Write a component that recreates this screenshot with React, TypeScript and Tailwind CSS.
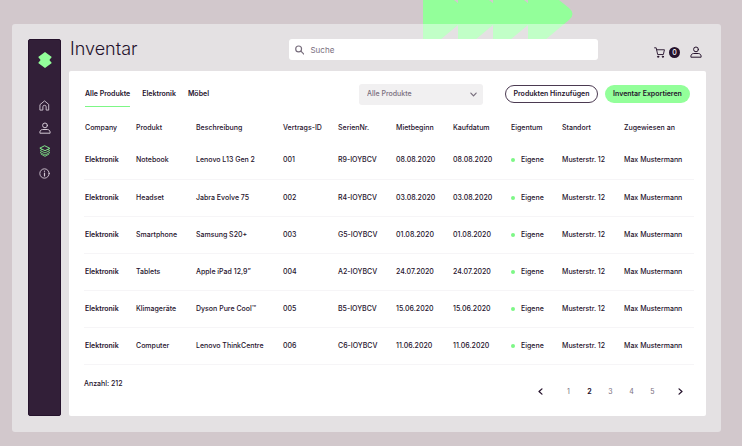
import { useState } from 'react';
import type { ReactNode } from 'react';

type Item = {
  company: string;
  product: string;
  description: string;
  contractId: string;
  serial: string;
  rentStart: string;
  bought: string;
};

const items: Item[] = [
  { company: 'Elektronik', product: 'Notebook', description: 'Lenovo L13 Gen 2', contractId: '001', serial: 'R9-IOYBCV', rentStart: '08.08.2020', bought: '08.08.2020' },
  { company: 'Elektronik', product: 'Headset', description: 'Jabra Evolve 75', contractId: '002', serial: 'R4-IOYBCV', rentStart: '03.08.2020', bought: '03.08.2020' },
  { company: 'Elektronik', product: 'Smartphone', description: 'Samsung S20+', contractId: '003', serial: 'G5-IOYBCV', rentStart: '01.08.2020', bought: '01.08.2020' },
  { company: 'Elektronik', product: 'Tablets', description: 'Apple iPad 12,9”', contractId: '004', serial: 'A2-IOYBCV', rentStart: '24.07.2020', bought: '24.07.2020' },
  { company: 'Elektronik', product: 'Klimageräte', description: 'Dyson Pure Cool™', contractId: '005', serial: 'B5-IOYBCV', rentStart: '15.06.2020', bought: '15.06.2020' },
  { company: 'Elektronik', product: 'Computer', description: 'Lenovo ThinkCentre', contractId: '006', serial: 'C6-IOYBCV', rentStart: '11.06.2020', bought: '11.06.2020' },
];

const columns = [
  { label: 'Company', width: 'w-[51px]' },
  { label: 'Produkt', width: 'w-[60px]' },
  { label: 'Beschreibung', width: 'w-[87px]' },
  { label: 'Vertrags-ID', width: 'w-[55px]' },
  { label: 'SerienNr.', width: 'w-[58px]' },
  { label: 'Mietbeginn', width: 'w-[57px]' },
  { label: 'Kaufdatum', width: 'w-[58px]' },
  { label: 'Eigentum', width: 'w-[51px]' },
  { label: 'Standort', width: 'w-[62px]' },
  { label: 'Zugewiesen an', width: 'w-[71px]' },
];

const tabs = ['Alle Produkte', 'Elektronik', 'Möbel'];

function Icon({ children, className = 'size-3' }: { children: ReactNode; className?: string }) {
  return (
    <svg
      viewBox="0 0 12 12"
      className={className}
      fill="none"
      stroke="currentColor"
      strokeWidth="1"
      strokeLinecap="round"
      strokeLinejoin="round"
      aria-hidden="true"
    >
      {children}
    </svg>
  );
}

function UserIcon() {
  return (
    <Icon>
      <circle cx="6" cy="3.4" r="2.4" />
      <path d="M0.9 10.8V10.2C0.9 8.6 2.2 7.5 3.7 7.5H8.3C9.8 7.5 11.1 8.6 11.1 10.2V10.8Z" />
    </Icon>
  );
}

function Arrows() {
  return (
    <svg viewBox="0 0 150 40" className="absolute top-0 left-[57%] h-10 w-[150px]" fill="#93ff9a" aria-hidden="true">
      {[0, 35, 70, 105].map((x) => (
        <path key={x} transform={`translate(${x} 0)`} d="M0 0H31L41 8Q48 14 41 20L17 40H0Z" />
      ))}
    </svg>
  );
}

function Sidebar() {
  return (
    <aside className="flex w-[33px] shrink-0 flex-col items-center rounded-xs border border-[#25122c] bg-[#321f38] pt-3 text-[#d3c8d4]">
      <a href="#" aria-label="Startseite">
        <svg viewBox="0 0 14 16" className="h-4 w-3.5" fill="#93ff9a" aria-hidden="true">
          <path d="M7 0L13.8 5L11.4 8L13.8 11L7 16L0.2 11L2.6 8L0.2 5Z" />
        </svg>
      </a>
      <nav className="mt-8 flex flex-col items-center gap-[11px]">
        <a href="#" aria-label="Übersicht">
          <Icon className="size-[11px]">
            <path d="M1.4 4.8L6 1L10.6 4.8V11H7.8V7.4Q7.8 5.8 6 5.8Q4.2 5.8 4.2 7.4V11H1.4Z" />
          </Icon>
        </a>
        <a href="#" aria-label="Benutzer">
          <UserIcon />
        </a>
        <a href="#" aria-label="Inventar" className="text-[#80e889]">
          <Icon>
            <path d="M6 0.9L10.8 3.3L6 5.7L1.2 3.3Z" />
            <path d="M2.6 4.6L1.2 5.5L6 7.9L10.8 5.5L9.4 4.6M2.2 6.9L1.2 7.6L6 10L10.8 7.6L9.8 6.9M2.2 9.2L6 11.4L9.8 9.2" strokeWidth="0.8" />
          </Icon>
        </a>
        <a href="#" aria-label="Info">
          <Icon className="size-[11px]">
            <circle cx="6" cy="6" r="5.1" />
            <path d="M6 5.6V8.7M6 3.3V3.5" strokeWidth="1.3" />
          </Icon>
        </a>
      </nav>
    </aside>
  );
}

function Header() {
  return (
    <header className="flex h-8 items-start pr-1">
      <h1 className="w-[220px] pl-px text-[18px] leading-5 font-light">Inventar</h1>
      <label className="flex h-[21px] flex-1 items-center gap-1.5 rounded-[3px] bg-white px-1.5 text-[#786e7d]">
        <Icon className="size-2.5">
          <circle cx="4.6" cy="4.6" r="3.7" strokeWidth="1.5" />
          <path d="M7.5 7.5L11.2 11.2" strokeWidth="1.5" />
        </Icon>
        <input
          type="search"
          aria-label="Suche"
          placeholder="Suche"
          className="h-4 w-full bg-transparent text-[8px] leading-4 outline-none placeholder:text-[#786e7d]"
        />
      </label>
      <div className="ml-14 flex items-center gap-2.5 pt-[7px]">
        <button type="button" aria-label="Warenkorb" className="flex items-center gap-1">
          <Icon className="size-[11px]">
            <path d="M0.6 0.9H2.4L4 8.2H10.2L11.4 3H3" />
            <circle cx="4.5" cy="10.6" r="0.7" fill="currentColor" />
            <circle cx="9.7" cy="10.6" r="0.7" fill="currentColor" />
          </Icon>
          <span className="flex size-[11px] items-center justify-center rounded-full bg-[#25122c] text-[7px] leading-none font-medium text-white">
            0
          </span>
        </button>
        <button type="button" aria-label="Konto">
          <UserIcon />
        </button>
      </div>
    </header>
  );
}

export default function App() {
  const [tab, setTab] = useState(tabs[0]);
  const [page, setPage] = useState(2);

  return (
    <div className="relative min-h-screen bg-[#d2c8cc] pt-6 pr-[21px] pb-3.5 pl-3 font-['Inter','Liberation_Sans',sans-serif] text-[#25122c]">
      <Arrows />
      <div className="relative flex gap-2 rounded-[3px] bg-[#fbffff]/45 pt-[15px] pr-[15px] pb-4 pl-4">
        <Sidebar />
        <div className="min-w-0 flex-1">
          <Header />
          <main className="rounded-xs bg-white pt-2.5 pr-3 pb-[18px] pl-[15px] text-[7px] leading-3">
            <div className="flex items-center pl-px">
              <div className="flex flex-1 items-start gap-3 pt-[7px]">
                {tabs.map((name) => (
                  <button
                    key={name}
                    type="button"
                    onClick={() => setTab(name)}
                    className={`border-b pb-1.5 font-semibold ${tab === name ? 'border-[#7df786]' : 'border-transparent'}`}
                  >
                    {name}
                  </button>
                ))}
              </div>
              <div className="relative w-[124px] text-[#786e7d]">
                <select
                  aria-label="Produktfilter"
                  className="h-[21px] w-full appearance-none rounded-[3px] bg-[#f1f0f1] px-2 text-[7px] leading-3 font-medium"
                >
                  <option>Alle Produkte</option>
                  <option>Elektronik</option>
                  <option>Möbel</option>
                </select>
                <Icon className="pointer-events-none absolute top-[7px] right-1.5 size-[7px]">
                  <path d="M1.5 3.5L6 8.5L10.5 3.5" strokeWidth="2" />
                </Icon>
              </div>
              <div className="ml-[22px] flex gap-[7px] pr-1">
                <button type="button" className="h-[18px] w-[93px] rounded-full border border-[#4b3a51] font-semibold whitespace-nowrap">
                  Produkten Hinzufügen
                </button>
                <button type="button" className="h-[18px] w-[85px] rounded-full bg-[#93ff9a] font-semibold whitespace-nowrap">
                  Inventar Exportieren
                </button>
              </div>
            </div>

            <table className="mt-[7px] w-full table-fixed text-left whitespace-nowrap">
              <thead>
                <tr className="h-7">
                  {columns.map((column) => (
                    <th key={column.label} className={`p-0 pl-px font-medium ${column.width}`}>
                      {column.label}
                    </th>
                  ))}
                </tr>
              </thead>
              <tbody>
                {items.map((item) => (
                  <tr key={item.contractId} className="h-[37px] border-b border-[#f6f5f7] font-medium *:p-0 *:pl-px">
                    <td className="font-semibold">{item.company}</td>
                    <td>{item.product}</td>
                    <td>{item.description}</td>
                    <td>{item.contractId}</td>
                    <td>{item.serial}</td>
                    <td>{item.rentStart}</td>
                    <td>{item.bought}</td>
                    <td>
                      <span className="flex items-center gap-1.5">
                        <span className="size-1 rounded-full bg-[#7df786]" />
                        Eigene
                      </span>
                    </td>
                    <td>Musterstr. 12</td>
                    <td>Max Mustermann</td>
                  </tr>
                ))}
              </tbody>
            </table>

            <div className="flex items-end justify-between pt-[13px] pr-2.5">
              <p className="pb-2 font-medium">Anzahl: 212</p>
              <nav aria-label="Seiten" className="flex items-center pt-2">
                <button type="button" aria-label="Zurück" onClick={() => setPage(Math.max(1, page - 1))} className="mr-3.5">
                  <Icon className="size-[7px]">
                    <path d="M8.5 1.5L3.5 6L8.5 10.5" strokeWidth="2.2" />
                  </Icon>
                </button>
                {[1, 2, 3, 4, 5].map((n) => (
                  <button
                    key={n}
                    type="button"
                    onClick={() => setPage(n)}
                    className={`w-[21px] ${page === n ? 'font-bold' : 'text-[#786e7d]'}`}
                  >
                    {n}
                  </button>
                ))}
                <button type="button" aria-label="Weiter" onClick={() => setPage(Math.min(5, page + 1))} className="ml-3.5">
                  <Icon className="size-[7px]">
                    <path d="M3.5 1.5L8.5 6L3.5 10.5" strokeWidth="2.2" />
                  </Icon>
                </button>
              </nav>
            </div>
          </main>
        </div>
      </div>
    </div>
  );
}
